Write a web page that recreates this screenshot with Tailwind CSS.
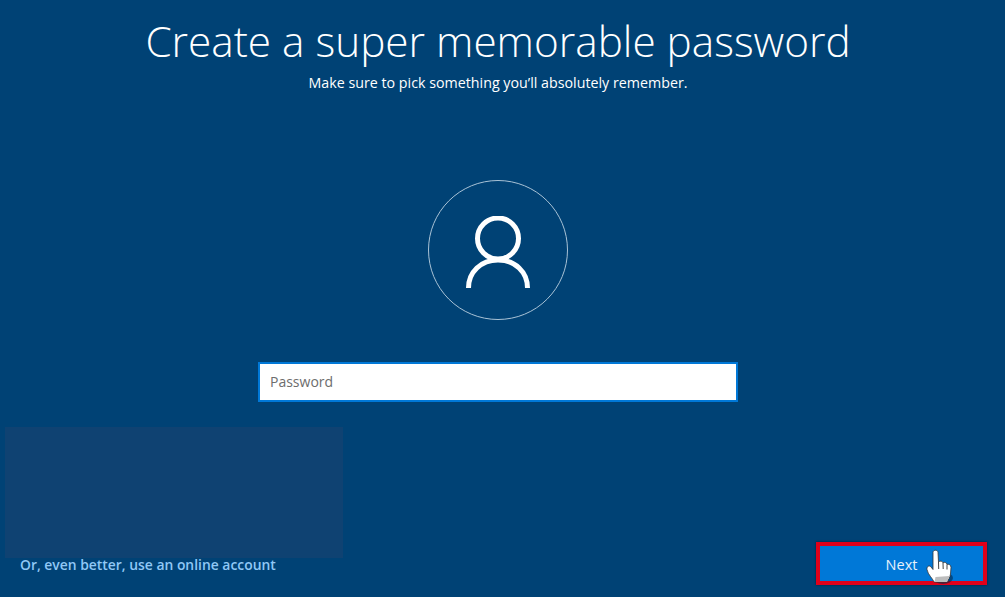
<!DOCTYPE html>
<html lang="en">
<head>
  <meta charset="UTF-8" />
  <title>Create a password</title>
  <script src="https://cdn.jsdelivr.net/npm/@tailwindcss/browser@4"></script>
</head>
<body class="h-[597px] w-[1005px] overflow-hidden bg-[#004275] font-['Open_Sans',sans-serif] text-white">
  <main class="flex h-full flex-col">
    <h1 class="mt-[14px] h-[54px] w-[996px] text-center text-[42.3px] leading-[54px] font-light">Create a super memorable password</h1>
    <p class="mt-[5px] h-[20px] w-[996px] text-center text-[14.25px] leading-[20px]">Make sure to pick something you’ll absolutely remember.</p>

    <div class="mt-[87px] ml-[428px] flex h-[140px] w-[140px] items-center justify-center rounded-full border border-[#a9c2d6]">
      <svg class="mt-[6px]" width="66" height="74" viewBox="0 0 66 74" fill="none" stroke="white" stroke-width="5">
        <circle cx="33" cy="22.5" r="20.5" />
        <path d="M3.5 72 C3.5 56 16 44 33 44 C50 44 62.5 56 62.5 72" />
      </svg>
    </div>

    <div class="mt-[42px] ml-[258px] flex h-[40px] w-[480px] items-center border-2 border-[#0078d7] bg-white px-[10px]">
      <input type="text" placeholder="Password" class="-mt-[2px] w-full bg-transparent text-[14px] text-black outline-none placeholder:text-[#6d6d6d]" />
    </div>

    <div class="mt-[25px] flex items-start">
      <div class="ml-[5px] w-[338px]">
        <div class="h-[131px] bg-[#0f4272]"></div>
        <a href="#" class="-mt-[3px] block pl-[15px] text-[13.9px] leading-[20px] font-semibold text-[#90c8f6]">Or, even better, use an online account</a>
      </div>
      <button class="relative mt-[115px] ml-[473px] h-[43px] w-[171px] border-4 border-[#e2001a] bg-[#0078d7] pt-[2px] text-[14.5px] text-[#e6f2fb] shadow-[0_0_2px_#001f3f]">
        Next
        <svg class="absolute top-[3px] left-[106px]" width="28" height="36" viewBox="0 0 28 36">
          <ellipse cx="17" cy="29" rx="10" ry="6" fill="#00284d" opacity="0.6" />
          <path d="M7 3.5 C7 0.5 12 0.5 12 3.5 L12.5 13 C14 11.5 16.5 12 17 13.8 C18.5 12.8 20.5 13.5 21 15.3 C22.5 14.8 25 15.8 25 18.5 L24.5 25 C24 29 22 31 21 33 L8 33 C6.5 29 2 26 1 20.5 C0.6 17 3.5 16 5 18 L7 20.5 Z" fill="white" stroke="#333" stroke-width="0.8" />
          <path d="M12.5 13 L12.7 20 M17 13.8 L17.2 20 M21 15.3 L21 20.5" stroke="#444" stroke-width="1" fill="none" />
          <path d="M9.5 28 L23.5 27 L21 33 L8.5 33 Z" fill="#bdbdbd" />
        </svg>
      </button>
    </div>
  </main>
</body>
</html>
